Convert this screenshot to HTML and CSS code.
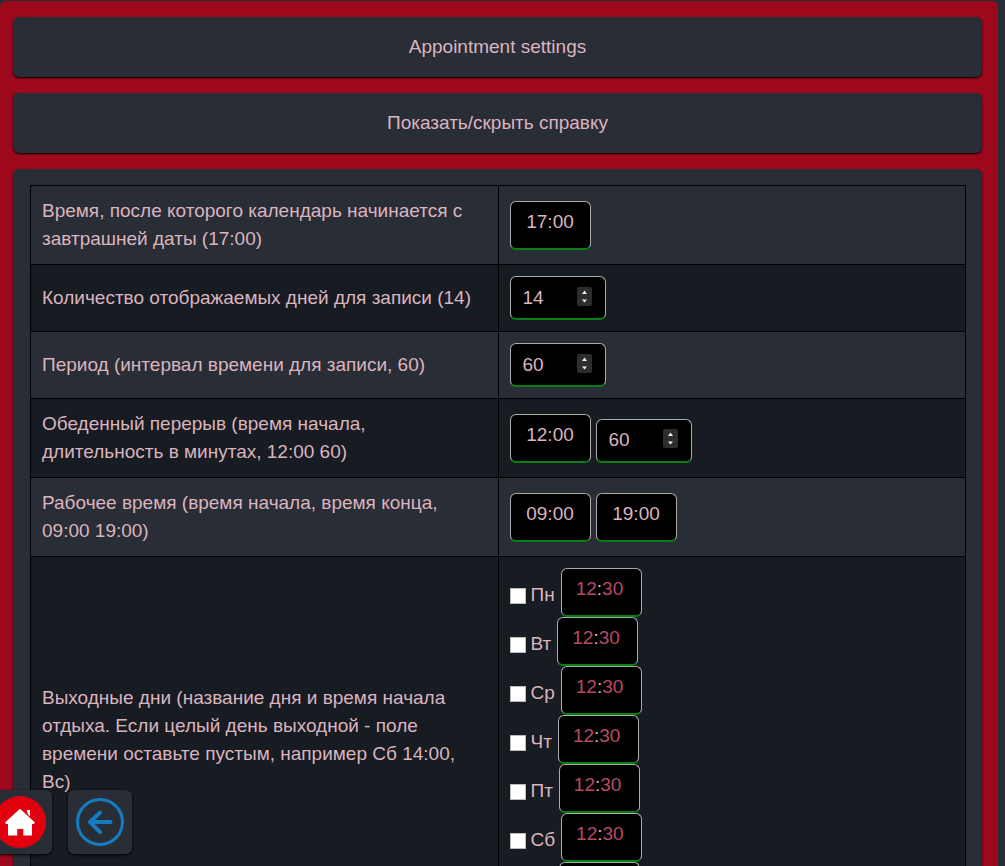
FILE: index.html
```html
<!DOCTYPE html>
<html lang="ru">
<head>
<meta charset="utf-8">
<meta name="viewport" content="width=device-width, initial-scale=1">
<title>Appointment settings</title>
<link rel="stylesheet" href="styles.css">
</head>
<body>
<main class="page">
  <h1 class="card heading">Appointment settings</h1>
  <button type="button" class="card heading">Показать/скрыть справку</button>
  <form class="card panel">
    <table class="settings">
      <tbody>
        <tr>
          <td><label for="tomorrow">Время, после которого календарь начинается с завтрашней даты (17:00)</label></td>
          <td><div class="fields"><input id="tomorrow" class="field time" type="text" value="17:00"></div></td>
        </tr>
        <tr>
          <td><label for="days">Количество отображаемых дней для записи (14)</label></td>
          <td><div class="fields"><input id="days" class="field number" type="number" value="14"></div></td>
        </tr>
        <tr>
          <td><label for="period">Период (интервал времени для записи, 60)</label></td>
          <td><div class="fields"><input id="period" class="field number" type="number" value="60"></div></td>
        </tr>
        <tr>
          <td><label for="lunch">Обеденный перерыв (время начала, длительность в минутах, 12:00 60)</label></td>
          <td><div class="fields"><input id="lunch" class="field time" type="text" value="12:00"><input class="field number" type="number" value="60" aria-label="Длительность в минутах"></div></td>
        </tr>
        <tr>
          <td><label for="work">Рабочее время (время начала, время конца, 09:00 19:00)</label></td>
          <td><div class="fields"><input id="work" class="field time" type="text" value="09:00"><input class="field time" type="text" value="19:00" aria-label="Время конца"></div></td>
        </tr>
        <tr>
          <td>Выходные дни (название дня и время начала отдыха. Если целый день выходной - поле времени оставьте пустым, например Сб 14:00, Вс)</td>
          <td>
            <div class="day"><label><input type="checkbox">Пн</label><input class="field time empty" type="time" value="12:30" aria-label="Пн, время"></div>
            <div class="day"><label><input type="checkbox">Вт</label><input class="field time empty" type="time" value="12:30" aria-label="Вт, время"></div>
            <div class="day"><label><input type="checkbox">Ср</label><input class="field time empty" type="time" value="12:30" aria-label="Ср, время"></div>
            <div class="day"><label><input type="checkbox">Чт</label><input class="field time empty" type="time" value="12:30" aria-label="Чт, время"></div>
            <div class="day"><label><input type="checkbox">Пт</label><input class="field time empty" type="time" value="12:30" aria-label="Пт, время"></div>
            <div class="day"><label><input type="checkbox">Сб</label><input class="field time empty" type="time" value="12:30" aria-label="Сб, время"></div>
            <div class="day"><label><input type="checkbox">Вс</label><input class="field time empty" type="time" value="12:30" aria-label="Вс, время"></div>
          </td>
        </tr>
      </tbody>
    </table>
  </form>
</main>
<nav class="dock">
  <a class="dock-link" href="#home" aria-label="Домой">
    <svg width="52" height="52" viewBox="0 0 52 52"><circle cx="26" cy="26" r="26" fill="#e2000f"/><path fill="#fff" d="M26 12.700 11 26.500l1.200 1.500H14V39.500H23.300V33H29.300V39.500H38V28h1.500L41 26.500z"/><path fill="#fff" d="M32.600 14H36v6.500l-1.800-1.800z"/></svg>
  </a>
  <a class="dock-link" href="#back" aria-label="Назад">
    <svg width="52" height="52" viewBox="0 0 52 52" fill="none" stroke="#147dc2" stroke-linecap="round" stroke-linejoin="round"><circle cx="26" cy="26" r="22.500" stroke-width="3"/><path stroke-width="4" d="M26 16.500 16 26l10 10M16 26h20.500"/></svg>
  </a>
</nav>
</body>
</html>
```
FILE: styles.css
```css
* {
  box-sizing: border-box;
}

body {
  margin: 0;
  padding: 1px 7px 16px 0;
  background: #292d35;
  color: #dab4bf;
  font: 19px/28px "Liberation Sans", Arial, sans-serif;
  color-scheme: dark;
  scrollbar-width: none;
}

.page {
  display: flex;
  flex-direction: column;
  gap: 16px;
  padding: 16px 16px 16px 13px;
  border-radius: 6px;
  background: #9e081c;
}

.card {
  margin: 0;
  padding: 16px;
  border: 0;
  border-radius: 6px;
  background: #292d35;
  box-shadow: 0 1px 2px #000;
}

.heading {
  width: 100%;
  color: inherit;
  font: inherit;
  text-align: center;
}

.panel {
  padding: 16px 16px 16px 17px;
}

.settings {
  width: 100%;
  table-layout: fixed;
  border-collapse: collapse;
}

.settings td {
  padding: 11px;
  border: 1px solid #000;
  vertical-align: middle;
}

.settings tr:nth-child(even) {
  background: #171b22;
}

.fields {
  display: flex;
  align-items: flex-end;
  gap: 5px;
}

.field {
  margin: 0;
  border: 1px solid #aaa;
  border-bottom: 2px solid #087f12;
  border-radius: 6px;
  background: #000;
  color: inherit;
  font: inherit;
}

.number {
  width: 96px;
  height: 44px;
  padding: 0 13px 0 12px;
}

.number::-webkit-inner-spin-button {
  width: 15px;
  height: 19px;
  appearance: none;
  opacity: 1;
  border-radius: 2px;
  background: #2d2d2d url("data:image/svg+xml,%3Csvg xmlns='http://www.w3.org/2000/svg' width='15' height='19' viewBox='0 0 15 19'%3E%3Cpath fill='%23eee' d='M5 7h5L7.500 3.500zM5 12.500h5L7.500 15.500z'/%3E%3C/svg%3E") center no-repeat;
}

.time {
  width: 81px;
  height: 49px;
  padding: 0 0 6px;
  text-align: center;
}

.empty {
  padding-left: 14px;
  text-align: left;
}

.empty::-webkit-calendar-picker-indicator,
.empty::-webkit-datetime-edit-ampm-field {
  display: none;
}

.empty::-webkit-datetime-edit,
.empty::-webkit-datetime-edit-hour-field,
.empty::-webkit-datetime-edit-minute-field,
.empty::-webkit-datetime-edit-text {
  padding: 0;
}

.empty::-webkit-datetime-edit-hour-field,
.empty::-webkit-datetime-edit-minute-field {
  color: #b84a63;
}

.day {
  display: flex;
  align-items: center;
  gap: 6px;
}

.day label {
  display: flex;
  align-items: center;
  gap: 5px;
  padding-top: 5px;
}

.day input[type="checkbox"] {
  width: 16px;
  height: 16px;
  margin: 2px 0 0;
  appearance: none;
  border: 1px solid #bbb;
  background: #fff;
}

.day input[type="checkbox"]:checked {
  background: #147dc2;
}

.dock {
  position: fixed;
  bottom: 12px;
  left: -12px;
  display: flex;
  gap: 16px;
}

.dock-link {
  display: flex;
  padding: 6px;
  border-radius: 6px;
  background: #292d35;
  box-shadow: 0 1px 3px #000;
}
```
